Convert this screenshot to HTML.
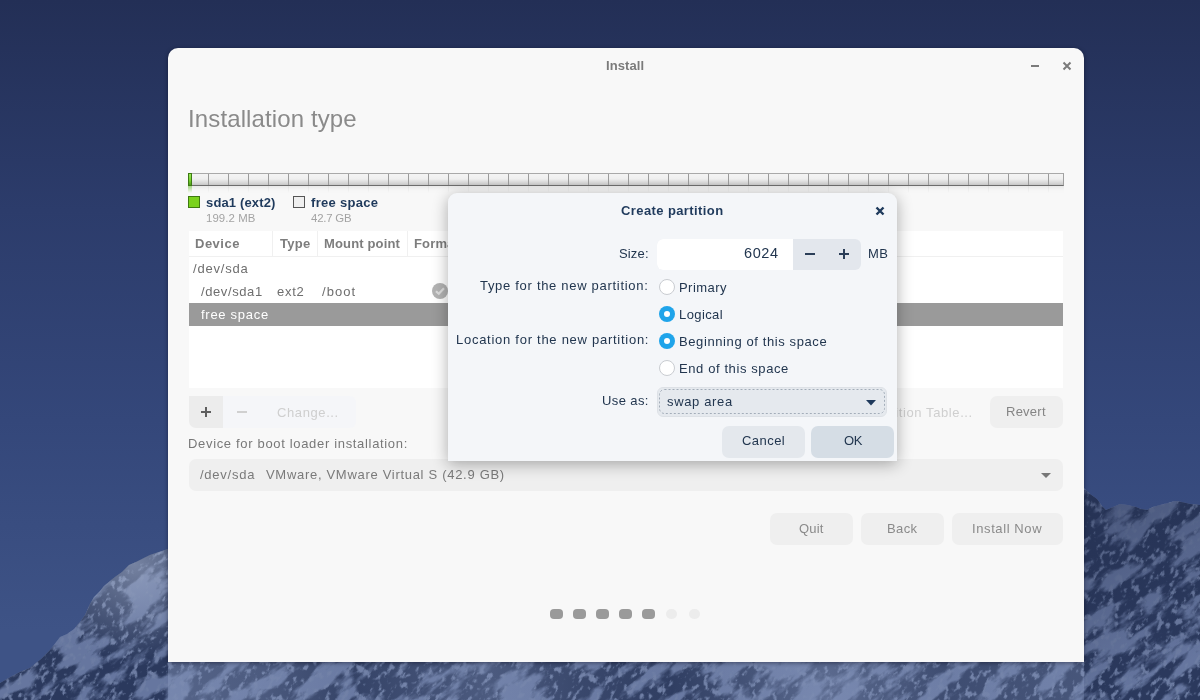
<!DOCTYPE html>
<html><head><meta charset="utf-8">
<style>
*{margin:0;padding:0;box-sizing:border-box}
html,body{width:1200px;height:700px;overflow:hidden}
body{position:relative;font-family:"Liberation Sans",sans-serif;background:#26325a}
.a{position:absolute;white-space:nowrap;line-height:1;will-change:transform}
#bg{position:absolute;left:0;top:0;width:1200px;height:700px}
#win{position:absolute;left:168px;top:48px;width:916px;height:614px;background:#f8f8f8;border-radius:10px 10px 0 0;overflow:hidden;box-shadow:0 1px 4px rgba(0,0,20,0.45)}
.t13{font-size:13px;letter-spacing:0.6px}
.btn{position:absolute;background:#efefef;border-radius:7px}
#dlg{position:absolute;left:448px;top:193px;width:449px;height:268px;background:#f4f6f9;border-radius:9px 9px 0 0;box-shadow:0 3px 16px rgba(0,0,0,0.32)}
.nv{color:#22364f}
.radio{position:absolute;width:16px;height:16px;border-radius:50%}
.r-off{background:#fff;border:1px solid #c9ccd1}
.r-on{background:#1fa4ea}
.r-on::after{content:"";position:absolute;left:5px;top:5px;width:6px;height:6px;border-radius:50%;background:#fff}
</style></head><body>
<svg id="bg" width="1200" height="700" viewBox="0 0 1200 700">
  <defs>
    <linearGradient id="sky" x1="0" y1="0" x2="0" y2="1">
      <stop offset="0" stop-color="#232f56"/>
      <stop offset="0.3" stop-color="#2c3c6b"/>
      <stop offset="0.6" stop-color="#34477a"/>
      <stop offset="0.9" stop-color="#3e5386"/>
    </linearGradient>
    <filter id="rock" x="-400" y="-200" width="2000" height="1600" filterUnits="userSpaceOnUse" color-interpolation-filters="sRGB">
      <feTurbulence type="fractalNoise" baseFrequency="0.022 0.06" numOctaves="5" seed="4" result="n"/>
      <feColorMatrix in="n" type="matrix" values="0 0 0 0 0.17  0 0 0 0 0.22  0 0 0 0 0.35  -7 0 0 0 4.3" result="d"/>
      <feComposite in="d" in2="SourceGraphic" operator="in"/>
    </filter>
    <filter id="rock2" x="-400" y="-200" width="2000" height="1600" filterUnits="userSpaceOnUse" color-interpolation-filters="sRGB">
      <feTurbulence type="fractalNoise" baseFrequency="0.12 0.2" numOctaves="3" seed="9" result="n"/>
      <feColorMatrix in="n" type="matrix" values="0 0 0 0 0.5  0 0 0 0 0.56  0 0 0 0 0.7  7 0 0 0 -3.9" result="d"/>
      <feComposite in="d" in2="SourceGraphic" operator="in"/>
    </filter>
    <linearGradient id="rdark" x1="0" y1="0" x2="0.3" y2="1">
      <stop offset="0" stop-color="#1f2a4a" stop-opacity="0.45"/>
      <stop offset="0.45" stop-color="#1f2a4a" stop-opacity="0.25"/>
      <stop offset="1" stop-color="#1f2a4a" stop-opacity="0"/>
    </linearGradient>
    <radialGradient id="lsnow" cx="0.8" cy="0.15" r="0.6">
      <stop offset="0" stop-color="#a8b4cf" stop-opacity="0.6"/>
      <stop offset="1" stop-color="#a3b0cc" stop-opacity="0"/>
    </radialGradient>
    <linearGradient id="strip" x1="0" y1="0" x2="1" y2="0">
      <stop offset="0" stop-color="#8a9abf" stop-opacity="0.45"/>
      <stop offset="0.1" stop-color="#8a9abf" stop-opacity="0.35"/>
      <stop offset="0.2" stop-color="#8a9abf" stop-opacity="0.1"/>
      <stop offset="0.35" stop-color="#8a9abf" stop-opacity="0.35"/>
      <stop offset="0.45" stop-color="#8a9abf" stop-opacity="0.15"/>
      <stop offset="0.55" stop-color="#8a9abf" stop-opacity="0.05"/>
      <stop offset="0.72" stop-color="#8a9abf" stop-opacity="0.5"/>
      <stop offset="0.85" stop-color="#8a9abf" stop-opacity="0.2"/>
      <stop offset="1" stop-color="#8a9abf" stop-opacity="0.3"/>
    </linearGradient>
    <clipPath id="mtn"><path d="M0,683 L12,676 L20,672 L30,668 L41,659 L50,650 L60,637 L67,634 L74,629 L80,622 L85,615 L90,604 L94,597 L100,591 L104,586 L110,581 L115,577 L122,572 L129,565 L136,562 L142,559 L150,555 L156,553 L162,551 L168,549 L200,548 L260,590 L330,640 L420,655 L520,640 L600,650 L700,660 L800,650 L900,640 L1000,600 L1060,520 L1084,488 L1090,494 L1097,499 L1102,506 L1106,510 L1113,507 L1120,504 L1128,505 L1136,507 L1141,509 L1147,510 L1153,507 L1160,505 L1168,503 L1175,501 L1182,502 L1190,504 L1200,505 L1200,700 L0,700 Z"/></clipPath>
  </defs>
  <rect width="1200" height="700" fill="url(#sky)"/>
  <g clip-path="url(#mtn)">
    <rect width="1200" height="700" fill="#7686ad"/>
    <g transform="rotate(-38 600 600)"><rect x="-400" y="-200" width="2000" height="1600" fill="#fff" filter="url(#rock)"/></g>
    <g transform="rotate(-60 600 600)"><rect x="-400" y="-200" width="2000" height="1600" fill="#fff" filter="url(#rock2)"/></g>
    <rect width="1200" height="700" fill="#2f3f6c" opacity="0.22"/>
    <rect x="168" y="660" width="916" height="40" fill="url(#strip)"/>
    <rect x="1084" y="490" width="116" height="210" fill="url(#rdark)"/>
    <rect x="0" y="540" width="168" height="160" fill="url(#lsnow)"/>
  </g>
</svg>

<div id="win">
</div>

<!-- title bar -->
<div class="a" style="left:606px;top:59px;font-size:13px;font-weight:bold;color:#7b7b7b;letter-spacing:0.1px">Install</div>
<div class="a" style="left:1031px;top:65px;width:8px;height:2px;background:#7b7b7b"></div>
<svg class="a" style="left:1062px;top:61px" width="10" height="10" viewBox="0 0 10 10"><path d="M1.5,1.5 L8.5,8.5 M8.5,1.5 L1.5,8.5" stroke="#7b7b7b" stroke-width="2"/></svg>

<div class="a" style="left:188px;top:106.6px;font-size:24px;color:#8a8a8a;letter-spacing:0.12px">Installation type</div>

<!-- partition bar -->
<div class="a" style="left:188px;top:173px;width:876px;height:13px;border-top:1px solid #a9a9a9;border-bottom:1px solid #6d6d6d;border-right:1px solid #a0a0a0;background:repeating-linear-gradient(90deg,transparent 0,transparent 19px,#9c9c9c 19px,#9c9c9c 20px) 1px 0/100% 100%,linear-gradient(#f4f4f4,#efefef 45%,#d0d0d0 90%,#c4c4c4)"></div>
<div class="a" style="left:188px;top:173px;width:4px;height:13px;background:linear-gradient(#9be85a,#76d22c 60%,#4f9a1c);border:1px solid #3d7a14"></div>
<div class="a" style="left:188px;top:186px;width:876px;height:7px;opacity:0.5;background:repeating-linear-gradient(90deg,transparent 0,transparent 19px,#c8c8c8 19px,#c8c8c8 20px) 1px 0/100% 100%,linear-gradient(#d8d8d8,#f7f7f7);-webkit-mask-image:linear-gradient(#000,transparent)"></div>
<div class="a" style="left:188px;top:186px;width:4px;height:7px;background:linear-gradient(rgba(110,200,50,0.55),rgba(120,210,60,0))"></div>

<!-- legend -->
<div class="a" style="left:188px;top:196px;width:12px;height:12px;background:#7ad21c;border:1px solid #3e7a10"></div>
<div class="a" style="left:206px;top:196.4px;font-size:13px;font-weight:bold;color:#1f3a5c;letter-spacing:0.15px">sda1 (ext2)</div>
<div class="a" style="left:206px;top:212.6px;font-size:11.4px;color:#a3a3a3;letter-spacing:0.1px">199.2 MB</div>
<div class="a" style="left:293px;top:196px;width:12px;height:12px;background:#efefef;border:1px solid #555"></div>
<div class="a" style="left:311px;top:196.4px;font-size:13px;font-weight:bold;color:#1f3a5c;letter-spacing:0.3px">free space</div>
<div class="a" style="left:311px;top:212.6px;font-size:11.4px;color:#a3a3a3;letter-spacing:-0.2px">42.7 GB</div>

<!-- table -->
<div class="a" style="left:189px;top:231px;width:874px;height:157px;background:#fff"></div>
<div class="a" style="left:189px;top:231px;width:874px;height:26px;background:#fff;border-bottom:1px solid #f0f0f0"></div>
<div class="a" style="left:272px;top:231px;width:1px;height:26px;background:#f0f0f0"></div>
<div class="a" style="left:317px;top:231px;width:1px;height:26px;background:#f0f0f0"></div>
<div class="a" style="left:407px;top:231px;width:1px;height:26px;background:#f0f0f0"></div>
<div class="a t13" style="left:195px;top:237.3px;font-weight:bold;color:#7d7d7d;letter-spacing:0.5px">Device</div>
<div class="a t13" style="left:280px;top:237.3px;font-weight:bold;color:#7d7d7d;letter-spacing:0.3px">Type</div>
<div class="a t13" style="left:324px;top:237.3px;font-weight:bold;color:#7d7d7d;letter-spacing:0.15px">Mount point</div>
<div class="a t13" style="left:414px;top:237.3px;font-weight:bold;color:#7d7d7d;letter-spacing:0.15px">Format?</div>

<div class="a t13" style="left:193px;top:262px;color:#6e6e6e;letter-spacing:0.8px">/dev/sda</div>
<div class="a t13" style="left:201px;top:285px;color:#6e6e6e">/dev/sda1</div>
<div class="a t13" style="left:277px;top:285px;color:#6e6e6e;letter-spacing:0.75px">ext2</div>
<div class="a t13" style="left:322px;top:285px;color:#6e6e6e;letter-spacing:1.05px">/boot</div>
<svg class="a" style="left:432px;top:283px" width="16" height="16" viewBox="0 0 16 16"><circle cx="8" cy="8" r="8" fill="#b3b3b3"/><path d="M4,8.2 L6.8,10.8 L12,5.2" stroke="#dcdcdc" stroke-width="2.2" fill="none"/></svg>
<div class="a" style="left:189px;top:303px;width:874px;height:23px;background:#9a9a9a"></div>
<div class="a t13" style="left:201px;top:307.7px;color:#fff;letter-spacing:0.72px">free space</div>

<!-- toolbar -->
<div class="a" style="left:223px;top:396px;width:133px;height:32px;background:#f5f6f9;border-radius:0 6px 6px 0"></div>
<div class="btn" style="left:189px;top:396px;width:34px;height:32px;border-radius:0 0 0 7px;background:#ececec"></div>
<div class="a" style="left:201px;top:411px;width:10px;height:2px;background:#5e5e5e"></div>
<div class="a" style="left:205px;top:407px;width:2px;height:10px;background:#5e5e5e"></div>
<div class="a" style="left:237px;top:411px;width:10px;height:2px;background:#d0d0d0"></div>
<div class="a t13" style="left:277px;top:405.5px;color:#cfcfcf">Change...</div>
<div class="a t13" style="left:837px;top:405.5px;color:#cfcfcf">New Partition Table...</div>
<div class="btn" style="left:990px;top:396px;width:73px;height:32px"></div>
<div class="a t13" style="left:1006px;top:404.8px;color:#858585;letter-spacing:0.25px">Revert</div>

<div class="a t13" style="left:188px;top:437px;color:#787878;letter-spacing:0.67px">Device for boot loader installation:</div>
<div class="btn" style="left:189px;top:459px;width:874px;height:32px;background:#efefef"></div>
<div class="a t13" style="left:200px;top:468px;color:#7a7a7a;letter-spacing:0.75px">/dev/sda</div><div class="a t13" style="left:265.5px;top:468px;color:#7a7a7a;letter-spacing:0.7px">VMware, VMware Virtual S (42.9 GB)</div>
<svg class="a" style="left:1041px;top:473px" width="10" height="5" viewBox="0 0 10 5"><path d="M0,0 L10,0 L5,5 Z" fill="#777"/></svg>

<!-- bottom buttons -->
<div class="btn" style="left:770px;top:513px;width:83px;height:32px"></div>
<div class="a t13" style="left:798.5px;top:522.4px;color:#8a8a8a;letter-spacing:0.2px">Quit</div>
<div class="btn" style="left:861px;top:513px;width:83px;height:32px"></div>
<div class="a t13" style="left:887px;top:522.4px;color:#8a8a8a;letter-spacing:0.4px">Back</div>
<div class="btn" style="left:952px;top:513px;width:111px;height:32px"></div>
<div class="a t13" style="left:972px;top:522.4px;color:#8a8a8a">Install Now</div>

<!-- dots -->
<div class="a" style="left:550px;top:609px;width:13px;height:10px;border-radius:4px;background:#9a9a9a"></div>
<div class="a" style="left:573px;top:609px;width:13px;height:10px;border-radius:4px;background:#9a9a9a"></div>
<div class="a" style="left:596px;top:609px;width:13px;height:10px;border-radius:4px;background:#9a9a9a"></div>
<div class="a" style="left:619px;top:609px;width:13px;height:10px;border-radius:4px;background:#9a9a9a"></div>
<div class="a" style="left:642px;top:609px;width:13px;height:10px;border-radius:4px;background:#9a9a9a"></div>
<div class="a" style="left:666px;top:609px;width:11px;height:10px;border-radius:5px;background:#ececec"></div>
<div class="a" style="left:689px;top:609px;width:11px;height:10px;border-radius:5px;background:#ececec"></div>

<!-- dialog -->
<div id="dlg"></div>
<div class="a nv" style="left:621px;top:204px;font-size:13px;font-weight:bold;color:#1f3a5c;letter-spacing:0.4px">Create partition</div>
<svg class="a" style="left:875px;top:206px" width="10" height="10" viewBox="0 0 10 10"><path d="M1.5,1.5 L8.5,8.5 M8.5,1.5 L1.5,8.5" stroke="#1f3a5c" stroke-width="2.4"/></svg>

<div class="a t13 nv" style="left:618.5px;top:247px;letter-spacing:0.15px">Size:</div>
<div class="a" style="left:657px;top:238.5px;width:204px;height:31px;border-radius:6px;background:#e3e7ed"></div>
<div class="a" style="left:657px;top:238.5px;width:136px;height:31px;border-radius:6px 0 0 6px;background:#fff"></div>
<div class="a nv" style="left:743.5px;top:246px;font-size:14.5px;letter-spacing:0.6px">6024</div>
<div class="a" style="left:805px;top:253px;width:10px;height:2px;background:#2b3e58"></div>
<div class="a" style="left:839px;top:253px;width:10px;height:2px;background:#2b3e58"></div>
<div class="a" style="left:843px;top:249px;width:2px;height:10px;background:#2b3e58"></div>
<div class="a t13 nv" style="left:868px;top:247px;letter-spacing:0.5px">MB</div>

<div class="a t13 nv" style="left:480px;top:278.8px;letter-spacing:0.7px">Type for the new partition:</div>
<div class="a t13 nv" style="left:456px;top:333.2px;letter-spacing:0.73px">Location for the new partition:</div>
<div class="radio r-off" style="left:659px;top:279px"></div>
<div class="radio r-on" style="left:659px;top:306px"></div>
<div class="radio r-on" style="left:659px;top:333px"></div>
<div class="radio r-off" style="left:659px;top:360px"></div>
<div class="a t13 nv" style="left:679px;top:281.3px;letter-spacing:0.45px">Primary</div>
<div class="a t13 nv" style="left:679px;top:308.4px;letter-spacing:0.4px">Logical</div>
<div class="a t13 nv" style="left:679px;top:334.6px">Beginning of this space</div>
<div class="a t13 nv" style="left:679px;top:362px">End of this space</div>

<div class="a t13 nv" style="left:601.5px;top:394.4px;letter-spacing:0.4px">Use as:</div>
<div class="a" style="left:657px;top:386.5px;width:230px;height:30px;border-radius:6px;background:#e5e9ee;border:1px solid #dde1e6"></div>
<svg class="a" style="left:659px;top:389px" width="226" height="25" viewBox="0 0 226 25"><rect x="0.5" y="0.5" width="225" height="24" rx="5" fill="none" stroke="#a3adb9" stroke-width="1" stroke-dasharray="2 2"/></svg>
<div class="a t13 nv" style="left:667px;top:394.6px;letter-spacing:0.65px">swap area</div>
<svg class="a" style="left:866px;top:399.5px" width="10" height="6" viewBox="0 0 10 6"><path d="M0,0 L10,0 L5,5.5 Z" fill="#1f3a5c"/></svg>

<div class="btn" style="left:722px;top:426px;width:83px;height:32px;background:#e4e8ed"></div>
<div class="a t13 nv" style="left:741.5px;top:434px;letter-spacing:0.45px">Cancel</div>
<div class="btn" style="left:811px;top:426px;width:83px;height:32px;background:#d5dde5"></div>
<div class="a t13 nv" style="left:843.5px;top:434px;letter-spacing:-0.3px">OK</div>

</body></html>
